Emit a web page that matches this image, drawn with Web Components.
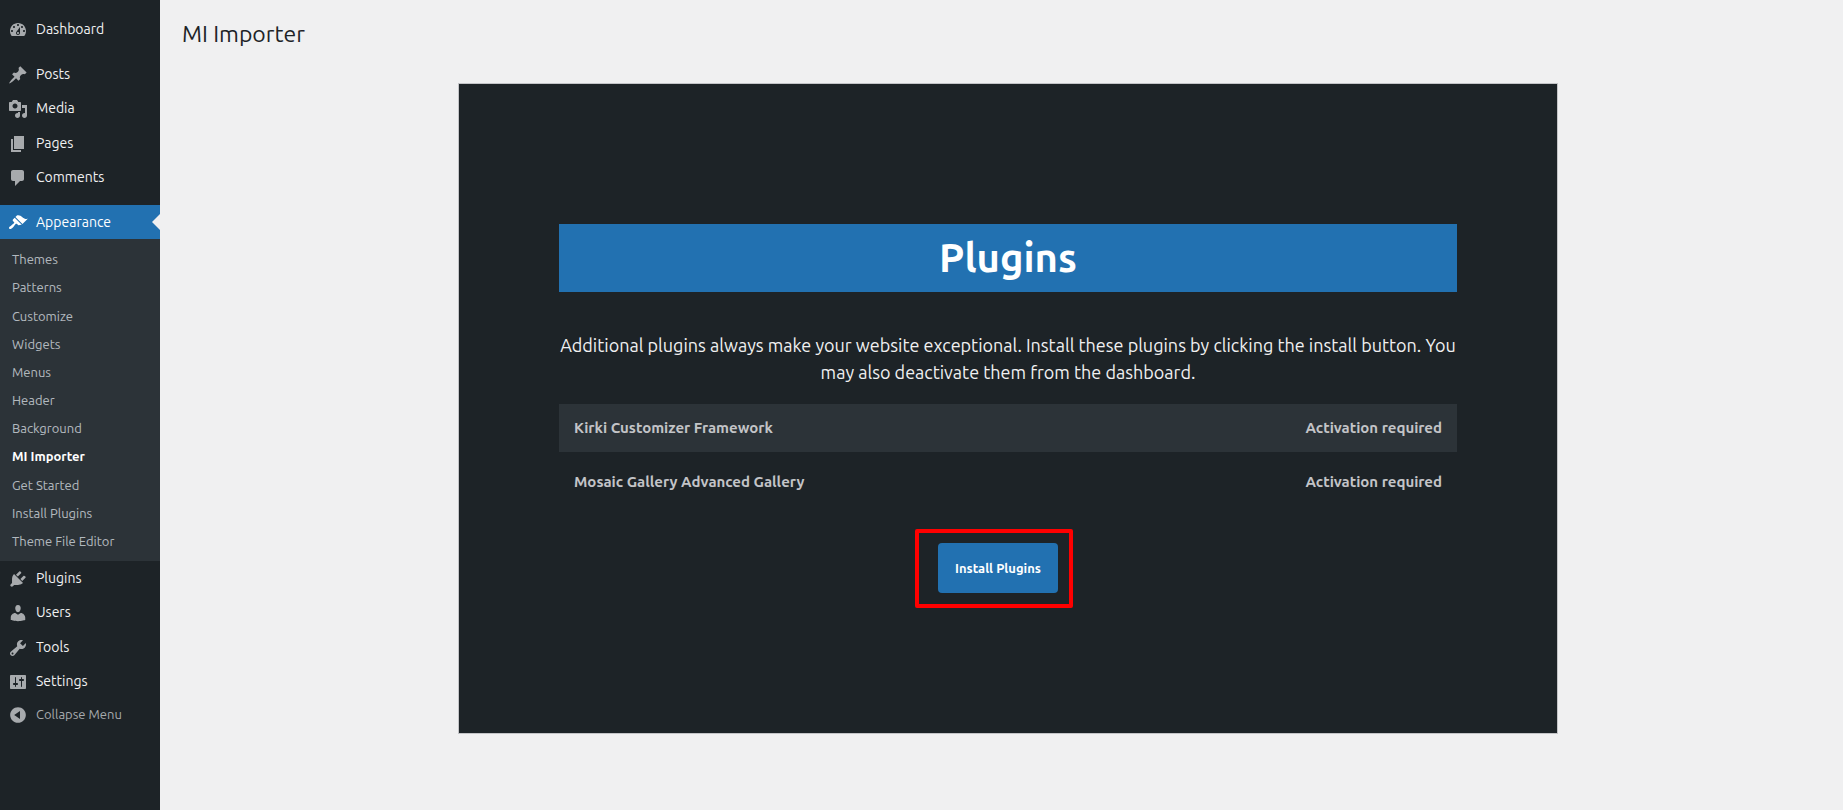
<!DOCTYPE html>
<html>
<head>
<meta charset="utf-8">
<title>MI Importer</title>
<style>
  html, body { margin: 0; padding: 0; height: 100%; background: #f0f0f1; }
  body { font-family: "Ubuntu", "Noto Sans", sans-serif; overflow: hidden; }
</style>
</head>
<body>
<wp-shell>
  <wp-sidebar slot="side"></wp-sidebar>
  <wp-page slot="main" heading="MI Importer">
    <importer-panel heading="Plugins" text="Additional plugins always make your website exceptional. Install these plugins by clicking the install button. You may also deactivate them from the dashboard.">
      <plugin-row name="Kirki Customizer Framework" status="Activation required" striped></plugin-row>
      <plugin-row name="Mosaic Gallery Advanced Gallery" status="Activation required"></plugin-row>
    </importer-panel>
  </wp-page>
</wp-shell>

<script>
const ICONS = {
  dashboard: 'M3.76 16h12.48c1.1-1.37 1.76-3.11 1.76-5 0-4.42-3.58-8-8-8s-8 3.58-8 8c0 1.89.66 3.63 1.76 5zM10 4c.55 0 1 .45 1 1s-.45 1-1 1-1-.45-1-1 .45-1 1-1zM6 6c.55 0 1 .45 1 1s-.45 1-1 1-1-.45-1-1 .45-1 1-1zm8 0c.55 0 1 .45 1 1s-.45 1-1 1-1-.45-1-1 .45-1 1-1zm-5.37 5.55L12 7v6c0 1.1-.9 2-2 2s-2-.9-2-2c0-.57.24-1.08.63-1.45zM4 10c.55 0 1 .45 1 1s-.45 1-1 1-1-.45-1-1 .45-1 1-1zm12 0c.55 0 1 .45 1 1s-.45 1-1 1-1-.45-1-1 .45-1 1-1zm-5 3c0-.55-.45-1-1-1s-1 .45-1 1 .45 1 1 1 1-.45 1-1z',
  post: 'M10.44 3.02l1.82-1.82 6.36 6.35-1.83 1.82c-1.05-.68-2.48-.57-3.41.36l-.75.75c-.92.93-1.04 2.35-.35 3.41l-1.83 1.82-2.41-2.41-2.8 2.79c-.42.42-3.38 2.71-3.8 2.29s1.86-3.39 2.28-3.81l2.79-2.79L4.1 9.36l1.83-1.82c1.05.69 2.48.57 3.4-.36l.75-.75c.93-.92 1.05-2.35.36-3.41z',
  media: 'M13 11V4c0-.55-.45-1-1-1h-1.67L9 1H5L3.67 3H2c-.55 0-1 .45-1 1v7c0 .55.45 1 1 1h10c.55 0 1-.45 1-1zM7 4.5c1.38 0 2.5 1.12 2.5 2.5S8.38 9.5 7 9.5 4.5 8.38 4.5 7 5.62 4.5 7 4.5zM14 6h5v10.5c0 1.38-1.12 2.5-2.5 2.5S14 17.88 14 16.5s1.12-2.5 2.5-2.5c.17 0 .34.02.5.05V9h-3V6zm-4 8.05V13h2v3.5c0 1.38-1.12 2.5-2.5 2.5S7 17.88 7 16.5 8.12 14 9.5 14c.17 0 .34.02.5.05z',
  page: 'M6 15V2h10v13H6zm-1 1h8v2H3V5h2v11z',
  comments: 'M5 2h9c1.1 0 2 .9 2 2v7c0 1.1-.9 2-2 2h-2l-5 5v-5H5c-1.1 0-2-.9-2-2V4c0-1.1.9-2 2-2z',
  appearance: 'M14.48 11.06L7.41 3.99l1.5-1.5c.5-.56 2.3-.47 3.51.32 1.21.8 1.43 1.28 2.91 2.1 1.18.64 2.45 1.26 4.45.85zm-.71.71L6.7 4.7 4.93 6.47c-.39.39-.39 1.02 0 1.41l1.06 1.06c.39.39.39 1.03 0 1.42-.6.6-1.43 1.11-2.21 1.69-.35.26-.7.53-1.01.84C1.43 13.23.4 14.75 1.32 15.67c.92.92 2.44-.11 3.78-1.45.31-.31.58-.66.84-1.01.58-.78 1.09-1.61 1.69-2.21.39-.39 1.03-.39 1.42 0l1.06 1.06c.39.39 1.02.39 1.41 0z',
  plugins: 'M13.11 4.36L9.87 7.6 8 5.73l3.24-3.24c.35-.34 1.05-.2 1.56.32.52.51.66 1.21.31 1.55zm-8 1.77l.91-1.12 9.01 9.01-1.19.84c-.71.71-2.63 1.16-3.82 1.16H6.14L4.9 17.26c-.59.59-1.54.59-2.12 0-.59-.58-.59-1.53 0-2.12l1.24-1.24v-3.88c0-1.13.4-3.19 1.09-3.89zm7.26 3.97l3.24-3.24c.34-.35 1.04-.21 1.55.31.52.51.66 1.21.31 1.55l-3.24 3.25z',
  users: 'M10 9.25c-2.27 0-2.73-3.44-2.73-3.44C7 4.02 7.82 2 9.97 2c2.16 0 2.98 2.02 2.71 3.81 0 0-.41 3.44-2.68 3.44zm0 2.57L12.72 10c2.39 0 4.52 2.33 4.52 4.53v2.49s-3.65 1.13-7.24 1.13c-3.65 0-7.24-1.13-7.24-1.13v-2.49c0-2.25 1.94-4.48 4.47-4.48z',
  tools: 'M16.68 9.77c-1.34 1.34-3.3 1.67-4.95.99l-5.41 6.52c-.99.99-2.59.99-3.58 0s-.99-2.59 0-3.57l6.52-5.42c-.68-1.65-.35-3.61.99-4.95 1.28-1.28 3.12-1.62 4.72-1.06l-2.89 2.89 2.82 2.82 2.86-2.87c.53 1.58.18 3.39-1.08 4.65zM3.81 16.21c.4.39 1.04.39 1.43 0 .4-.4.4-1.04 0-1.43-.39-.4-1.03-.4-1.43 0-.39.39-.39 1.03 0 1.43z',
  settings: 'M18 16V4c0-.55-.45-1-1-1H3c-.55 0-1 .45-1 1v12c0 .55.45 1 1 1h14c.55 0 1-.45 1-1zM8 11h1c.55 0 1 .45 1 1s-.45 1-1 1H8v1.5c0 .28-.22.5-.5.5s-.5-.22-.5-.5V13H6c-.55 0-1-.45-1-1s.45-1 1-1h1V5.5c0-.28.22-.5.5-.5s.5.22.5.5V11zm5-2h-1c-.55 0-1-.45-1-1s.45-1 1-1h1V5.5c0-.28.22-.5.5-.5s.5.22.5.5V7h1c.55 0 1 .45 1 1s-.45 1-1 1h-1v5.5c0 .28-.22.5-.5.5s-.5-.22-.5-.5V9z',
  collapse: 'M10 2.16c4.33 0 7.84 3.51 7.84 7.84s-3.51 7.84-7.84 7.84S2.16 14.33 2.16 10 5.71 2.16 10 2.16zm2 11.72V6.12L6.18 9.97z'
};

class WpShell extends HTMLElement {
  constructor() {
    super();
    this.attachShadow({ mode: 'open' });
    this.shadowRoot.innerHTML = `
    <style>
      :host { display: flex; height: 810px; width: 100%; }
      ::slotted([slot=side]) { flex: 0 0 160px; }
      ::slotted([slot=main]) { flex: 1 1 auto; min-width: 0; }
    </style>
    <slot name="side"></slot>
    <slot name="main"></slot>`;
  }
}
customElements.define('wp-shell', WpShell);

class WpMenuItem extends HTMLElement {
  constructor() {
    super();
    this.attachShadow({ mode: 'open' });
  }
  connectedCallback() {
    var icon = ICONS[this.getAttribute('icon')];
    this.shadowRoot.innerHTML = `
    <style>
      :host { display: flex; align-items: center; height: var(--h, 34.5px); color: #f0f0f1; font-size: 14px; position: relative; }
      :host([current]) { background: #2271b1; color: #fff; --ic: #fff; height: 34px; }
      :host([muted]) { color: #a7aaad; font-size: 13px; --h: 32px; }
      svg { width: 20px; height: 20px; margin: 2px 8px 0; flex: none; fill: var(--ic, #a7aaad); }
      :host([muted]) svg { margin-top: 1px; }
      span { white-space: nowrap; }
      i { display: none; }
      :host([current]) i { display: block; position: absolute; right: 0; top: 50%; margin-top: -8px; border: 8px solid transparent; border-right-color: #f0f0f1; border-left: 0; }
    </style>
    <svg viewBox="0 0 20 20"><path d="${icon}"/></svg>
    <span><slot></slot></span>
    <i></i>`;
  }
}
customElements.define('wp-menu-item', WpMenuItem);

class WpSubItem extends HTMLElement {
  constructor() {
    super();
    this.attachShadow({ mode: 'open' });
    this.shadowRoot.innerHTML = `
    <style>
      :host { display: block; padding: 5px 12px; font-size: 13px; line-height: 18.2px; color: rgba(240,246,252,.7); white-space: nowrap; }
      :host([current]) { color: #fff; font-weight: 600; padding: 4px 12px 6px; }
    </style>
    <slot></slot>`;
  }
}
customElements.define('wp-sub-item', WpSubItem);

class WpSidebar extends HTMLElement {
  constructor() {
    super();
    this.attachShadow({ mode: 'open' });
    var items = (list) => list.map((i) => `<wp-menu-item icon="${i[0]}">${i[1]}</wp-menu-item>`).join('');
    var subs = ['Themes', 'Patterns', 'Customize', 'Widgets', 'Menus', 'Header', 'Background', 'MI Importer', 'Get Started', 'Install Plugins', 'Theme File Editor'];
    this.shadowRoot.innerHTML = `
    <style>
      :host { display: block; background: #1d2327; padding-top: 12px; box-sizing: border-box; height: 810px; }
      .sep { height: 10px; }
      .sub { background: #2c3338; padding: 6.7px 0 5.3px; }
    </style>
    ${items([['dashboard', 'Dashboard']])}
    <div class="sep"></div>
    ${items([['post', 'Posts'], ['media', 'Media'], ['page', 'Pages'], ['comments', 'Comments']])}
    <div class="sep"></div>
    <wp-menu-item icon="appearance" current>Appearance</wp-menu-item>
    <div class="sub">
      ${subs.map((s) => `<wp-sub-item ${s === 'MI Importer' ? 'current' : ''}>${s}</wp-sub-item>`).join('')}
    </div>
    ${items([['plugins', 'Plugins'], ['users', 'Users'], ['tools', 'Tools'], ['settings', 'Settings']])}
    <wp-menu-item icon="collapse" muted style="--h:31px">Collapse Menu</wp-menu-item>`;
  }
}
customElements.define('wp-sidebar', WpSidebar);

class WpPage extends HTMLElement {
  constructor() {
    super();
    this.attachShadow({ mode: 'open' });
  }
  connectedCallback() {
    this.shadowRoot.innerHTML = `
    <style>
      :host { display: block; padding: 19px 0 0 22px; box-sizing: border-box; }
      h1 { margin: 0 0 34px; font-size: 23px; font-weight: 400; line-height: 30px; color: #1d2327; }
    </style>
    <h1>${this.getAttribute('heading')}</h1>
    <slot></slot>`;
  }
}
customElements.define('wp-page', WpPage);

class PluginRow extends HTMLElement {
  constructor() {
    super();
    this.attachShadow({ mode: 'open' });
  }
  connectedCallback() {
    this.shadowRoot.innerHTML = `
    <style>
      :host { display: flex; justify-content: space-between; align-items: center; padding: 0 15px 2px; height: 48px; box-sizing: border-box; font-size: 15px; font-weight: 700; color: #c3c4c7; }
      :host([striped]) { background: #2c3338; }
      :host(:not([striped])) { height: 60px; }
    </style>
    <span>${this.getAttribute('name')}</span>
    <span>${this.getAttribute('status')}</span>`;
  }
}
customElements.define('plugin-row', PluginRow);

class ImporterPanel extends HTMLElement {
  constructor() {
    super();
    this.attachShadow({ mode: 'open' });
  }
  connectedCallback() {
    this.shadowRoot.innerHTML = `
    <style>
      :host { display: block; width: 1100px; height: 651px; margin-left: 276px; box-sizing: border-box; border: 1px solid #c3c4c7; padding: 140px 100px 0; background: #1d2327; color: #f0f0f1; }
      h2 { margin: 0 0 40px; height: 68px; line-height: 68px; background: #2271b1; color: #fff; text-align: center; font-size: 40px; font-weight: 700; }
      p { margin: 0 0 18px; font-size: 18px; line-height: 27px; text-align: center; }
      .cta { display: flex; justify-content: center; margin-top: 17px; padding-right: 28px; }
      .mark { border: 4px solid #f00; border-radius: 2px; padding: 10px 11px 11px 19px; }
      button { display: block; width: 120px; height: 50px; padding: 0; border: 0; border-radius: 4px; background: #2271b1; color: #fff; font: inherit; font-size: 13px; font-weight: 700; }
    </style>
    <h2>${this.getAttribute('heading')}</h2>
    <p>${this.getAttribute('text')}</p>
    <slot></slot>
    <div class="cta"><div class="mark"><button>Install Plugins</button></div></div>`;
  }
}
customElements.define('importer-panel', ImporterPanel);
</script>
</body>
</html>
